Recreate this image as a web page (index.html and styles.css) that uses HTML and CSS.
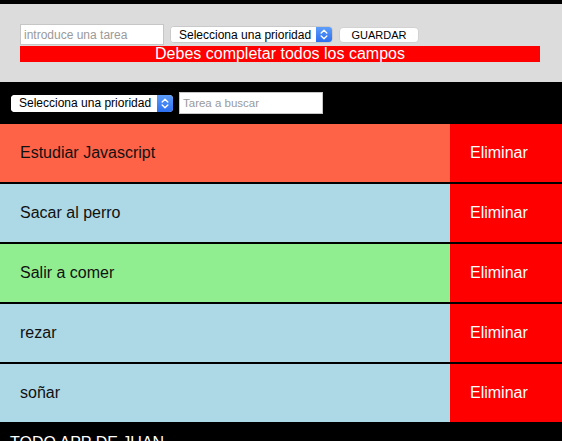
FILE: index.html
```html
<!DOCTYPE html>
<html lang="es">
<head>
<meta charset="utf-8">
<title>TODO APP DE JUAN</title>
<link rel="stylesheet" href="styles.css">
</head>
<body>
  <section class="form-panel">
    <div class="controls">
      <input class="field field-task" type="text" placeholder="introduce una tarea">
      <div class="picker picker-form">
        <select class="picker-select">
          <option>Selecciona una prioridad</option>
          <option>urgente</option>
          <option>diaria</option>
          <option>mensual</option>
        </select>
        <span class="picker-arrow">
          <svg width="8" height="11" viewBox="0 0 8 11"><path d="M1.2 4 L4 1.3 L6.8 4 M1.2 7 L4 9.7 L6.8 7" fill="none" stroke="#fff" stroke-width="1.4" stroke-linecap="round" stroke-linejoin="round"/></svg>
        </span>
      </div>
      <button class="save-btn" type="button">GUARDAR</button>
    </div>
    <div class="error">Debes completar todos los campos</div>
  </section>

  <section class="filter-bar">
    <div class="picker picker-filter">
      <select class="picker-select">
        <option>Selecciona una prioridad</option>
        <option>urgente</option>
        <option>diaria</option>
        <option>mensual</option>
      </select>
      <span class="picker-arrow">
        <svg width="8" height="11" viewBox="0 0 8 11"><path d="M1.2 4 L4 1.3 L6.8 4 M1.2 7 L4 9.7 L6.8 7" fill="none" stroke="#fff" stroke-width="1.4" stroke-linecap="round" stroke-linejoin="round"/></svg>
      </span>
    </div>
    <input class="field field-search" type="text" placeholder="Tarea a buscar">
  </section>

  <ul class="tasks">
    <li class="task urgent"><span class="task-title">Estudiar Javascript</span><button class="delete" type="button">Eliminar</button></li>
    <li class="task daily"><span class="task-title">Sacar al perro</span><button class="delete" type="button">Eliminar</button></li>
    <li class="task monthly"><span class="task-title">Salir a comer</span><button class="delete" type="button">Eliminar</button></li>
    <li class="task daily"><span class="task-title">rezar</span><button class="delete" type="button">Eliminar</button></li>
    <li class="task daily"><span class="task-title">soñar</span><button class="delete" type="button">Eliminar</button></li>
  </ul>

  <footer class="footer">TODO APP DE JUAN</footer>
</body>
</html>
```

FILE: styles.css
```css
* {
  box-sizing: border-box;
}

body {
  margin: 0;
  padding-top: 4px;
  background: #000;
  font-family: "Liberation Sans", Arial, sans-serif;
}

.form-panel {
  background: #dcdcdc;
  padding: 20px 22px 20px 20px;
}

.controls {
  display: flex;
  align-items: center;
  gap: 6px;
  height: 21px;
  margin-bottom: 1px;
}

.field {
  width: 144px;
  margin: 0;
  padding: 0 0 0 3px;
  border: 1px solid #c6c6c6;
  background: #fff;
  font-family: "Liberation Sans", Arial, sans-serif;
  font-size: 12px;
  color: #000;
  outline: none;
}

.field::placeholder {
  color: #9a9a9a;
}

.field-task {
  height: 21px;
}

.field-search {
  height: 22px;
  font-size: 11.5px;
}

.picker {
  display: flex;
  height: 17px;
  border-radius: 4px;
  overflow: hidden;
  background: #fff;
}

.picker-form {
  width: 163px;
  border: 1px solid #c9c9c9;
}

.picker-filter {
  width: 162px;
}

.picker-select {
  flex: 1;
  min-width: 0;
  -webkit-appearance: none;
  appearance: none;
  border: none;
  margin: 0;
  padding: 0 0 0 8px;
  background: #fff;
  font-family: "Liberation Sans", Arial, sans-serif;
  font-size: 12px;
  color: #000;
  outline: none;
}

.picker-filter .picker-select {
  padding-left: 8px;
}

.picker-arrow {
  width: 16px;
  display: flex;
  align-items: center;
  justify-content: center;
  background: linear-gradient(#5d9dfa, #2c6ff0);
}

.save-btn {
  width: 80px;
  height: 16px;
  margin: 0;
  padding: 0;
  border: 1px solid #d2d2d2;
  border-radius: 4px;
  background: #fff;
  font-family: "Liberation Sans", Arial, sans-serif;
  font-size: 11px;
  color: #000;
  line-height: 14px;
}

.error {
  height: 16px;
  background: #ff0000;
  color: #fff;
  font-size: 16px;
  line-height: 16px;
  text-align: center;
}

.filter-bar {
  display: flex;
  align-items: center;
  gap: 6px;
  padding: 10px 11px;
}

.tasks {
  list-style: none;
  margin: 0;
  padding: 0;
}

.task {
  display: flex;
  height: 60px;
  border-bottom: 2px solid #000;
}

.urgent {
  background: #ff6347;
}

.daily {
  background: #add8e6;
}

.monthly {
  background: #90ee90;
}

.task-title {
  flex: 1;
  display: flex;
  align-items: center;
  padding-left: 20px;
  font-size: 16px;
  color: #111;
}

.delete {
  width: 112px;
  margin: 0;
  padding: 0 0 0 20px;
  border: none;
  background: #ff0000;
  color: #fff;
  font-family: "Liberation Sans", Arial, sans-serif;
  font-size: 16px;
  text-align: left;
}

.footer {
  padding: 10px 10px;
  color: #fff;
  font-size: 16px;
}
```
